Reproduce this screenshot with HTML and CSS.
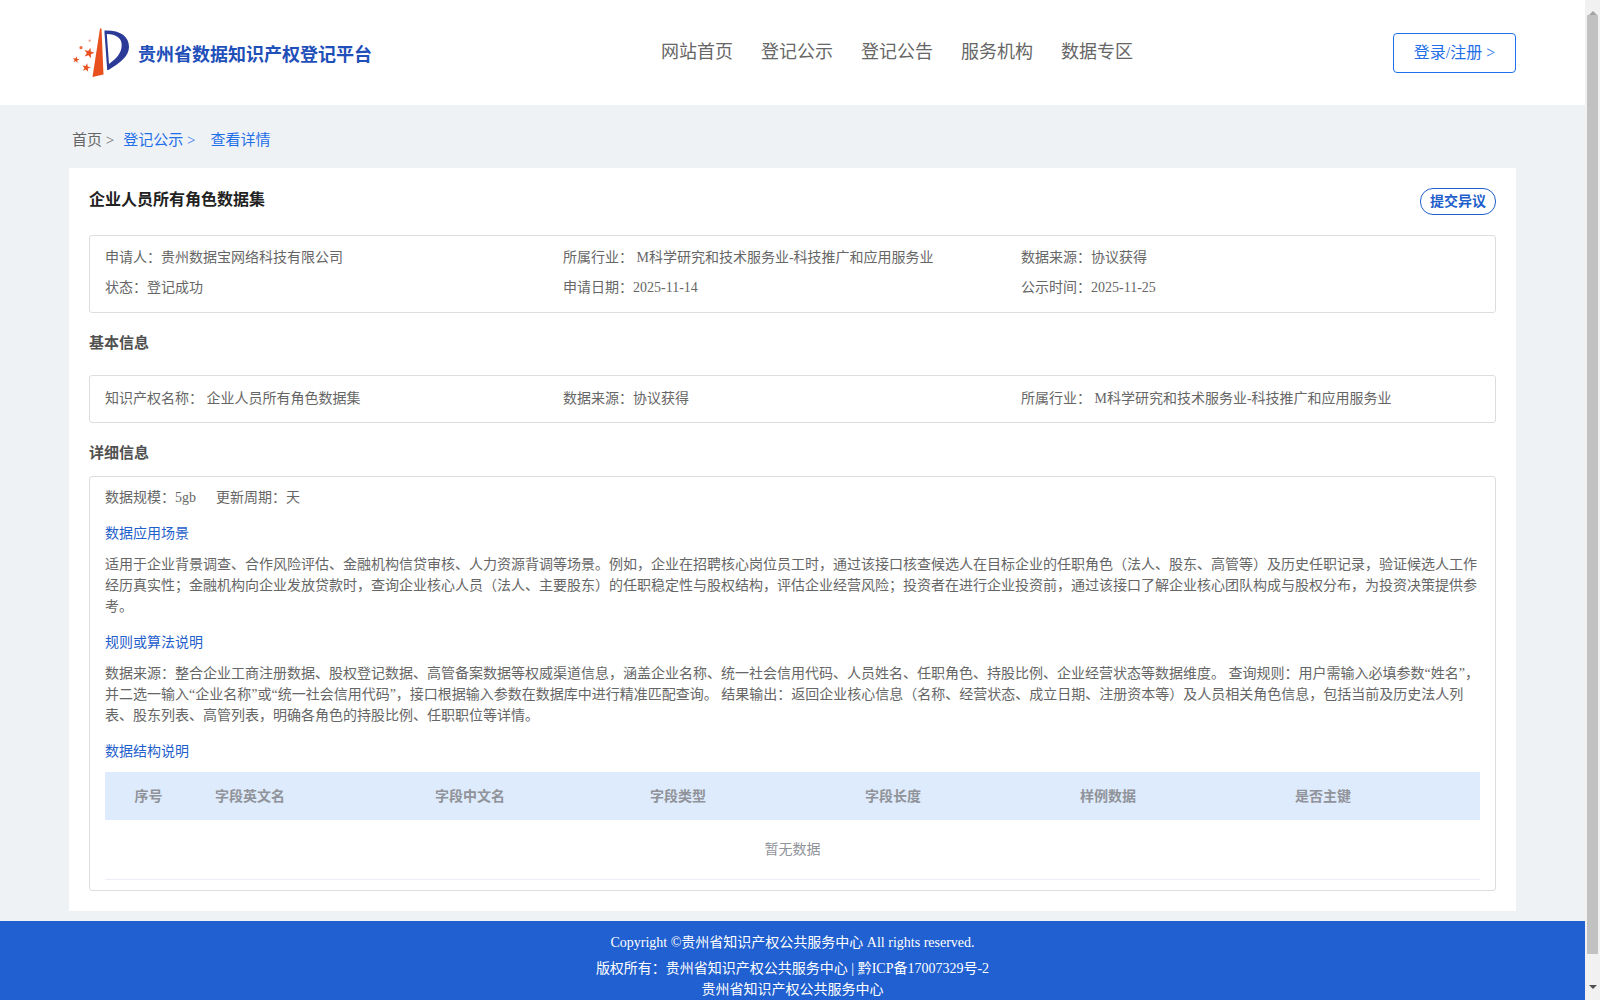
FILE: index.html
```html
<!DOCTYPE html>
<html lang="zh-CN">
<head>
<meta charset="utf-8">
<title>贵州省数据知识产权登记平台</title>
<link rel="stylesheet" href="styles.css">
</head>
<body>
<header class="topbar">
  <a class="brand">
    <svg class="brand-logo" viewBox="0 0 70 58" width="70" height="58">
      <defs>
        <polygon id="star" points="0,-1 .235,-.324 .951,-.309 .38,.124 .588,.809 0,.4 -.588,.809 -.38,.124 -.951,-.309 -.235,-.324"/>
      </defs>
      <path d="M36.500 6.500 C52 6 61 12 61 23 C61 32 52 39 40.500 46 L39.200 46 L36.500 9 Z M38.800 10 L41 40 C48 35 53.700 29 53.700 21 C53.700 14 48 10.200 38.800 10 Z" fill="#2b3a97" fill-rule="evenodd"/>
      <path d="M32 4.500 L33.500 4.500 L35.500 50.500 L24.500 53 Z" fill="#e8501f"/>
      <use href="#star" fill="#e8501f" transform="translate(21 29) scale(5.500) rotate(15)"/>
      <use href="#star" fill="#e8501f" transform="translate(8 35.700) scale(3.600) rotate(10)"/>
      <use href="#star" fill="#e8501f" transform="translate(18.300 43.700) scale(4.500) rotate(12)"/>
      <circle cx="13" cy="23.700" r="1.600" fill="#ee6a40"/>
      <circle cx="21.700" cy="16.700" r="1.100" fill="#f09a7c"/>
    </svg>
    <span class="brand-name">贵州省数据知识产权登记平台</span>
  </a>
  <nav class="nav">
    <a>网站首页</a>
    <a>登记公示</a>
    <a>登记公告</a>
    <a>服务机构</a>
    <a>数据专区</a>
  </nav>
  <a class="login">登录/注册 &gt;</a>
</header>

<div class="crumbs">
  <span class="crumb-home">首页 &gt;</span>
  <span class="crumb-link">登记公示 <i>&gt;</i></span>
  <span class="crumb-link">查看详情</span>
</div>

<main class="card">
  <div class="card-head">
    <h1>企业人员所有角色数据集</h1>
    <button class="objection">提交异议</button>
  </div>

  <section class="box meta">
    <div>申请人：贵州数据宝网络科技有限公司</div>
    <div>所属行业： M科学研究和技术服务业-科技推广和应用服务业</div>
    <div>数据来源：协议获得</div>
    <div>状态：登记成功</div>
    <div>申请日期：2025-11-14</div>
    <div>公示时间：2025-11-25</div>
  </section>

  <h2>基本信息</h2>
  <section class="box basic">
    <div>知识产权名称： 企业人员所有角色数据集</div>
    <div>数据来源：协议获得</div>
    <div>所属行业： M科学研究和技术服务业-科技推广和应用服务业</div>
  </section>

  <h2 class="detail-title">详细信息</h2>
  <section class="box detail">
    <div class="scale"><span>数据规模：5gb</span><span>更新周期：天</span></div>
    <h3>数据应用场景</h3>
    <p>适用于企业背景调查、合作风险评估、金融机构信贷审核、人力资源背调等场景。例如，企业在招聘核心岗位员工时，通过该接口核查候选人在目标企业的任职角色（法人、股东、高管等）及历史任职记录，验证候选人工作经历真实性；金融机构向企业发放贷款时，查询企业核心人员（法人、主要股东）的任职稳定性与股权结构，评估企业经营风险；投资者在进行企业投资前，通过该接口了解企业核心团队构成与股权分布，为投资决策提供参考。</p>
    <h3>规则或算法说明</h3>
    <p>数据来源：整合企业工商注册数据、股权登记数据、高管备案数据等权威渠道信息，涵盖企业名称、统一社会信用代码、人员姓名、任职角色、持股比例、企业经营状态等数据维度。 查询规则：用户需输入必填参数“姓名”，并二选一输入“企业名称”或“统一社会信用代码”，接口根据输入参数在数据库中进行精准匹配查询。 结果输出：返回企业核心信息（名称、经营状态、成立日期、注册资本等）及人员相关角色信息，包括当前及历史法人列表、股东列表、高管列表，明确各角色的持股比例、任职职位等详情。</p>
    <h3>数据结构说明</h3>
    <table class="fields">
      <colgroup>
        <col class="c-no"><col class="c-en"><col class="c-w"><col class="c-w"><col class="c-w"><col class="c-w"><col>
      </colgroup>
      <thead>
        <tr>
          <th class="th-no">序号</th>
          <th>字段英文名</th>
          <th>字段中文名</th>
          <th>字段类型</th>
          <th>字段长度</th>
          <th>样例数据</th>
          <th>是否主键</th>
        </tr>
      </thead>
      <tbody>
        <tr><td colspan="7">暂无数据</td></tr>
      </tbody>
    </table>
  </section>
</main>

<footer class="footer">
  <p>Copyright ©贵州省知识产权公共服务中心 All rights reserved.</p>
  <p>版权所有：贵州省知识产权公共服务中心 | 黔ICP备17007329号-2</p>
  <p>贵州省知识产权公共服务中心</p>
</footer>

<div class="scrollbar" aria-hidden="true">
  <span class="arrow-up"></span>
  <span class="thumb"></span>
  <span class="arrow-down"></span>
</div>
</body>
</html>
```
FILE: styles.css
```css
* { box-sizing: border-box; }
html { background: #f1f1f1; }
body {
  margin: 0 15px 0 0;
  background: #eff2f5;
  color: #666;
  font: 14px/21px "Liberation Serif", "Noto Sans CJK SC", serif;
}
a { text-decoration: none; }

.scrollbar {
  position: fixed;
  top: 0;
  right: 0;
  width: 15px;
  height: 1000px;
  background: #f1f1f1;
  display: flex;
  flex-direction: column;
  align-items: center;
}
.arrow-up, .arrow-down {
  flex: none;
  height: 15px;
  width: 8px;
  border-left: 4px solid transparent;
  border-right: 4px solid transparent;
}
.arrow-up { border-bottom: 4px solid #a3a3a3; border-top: 5px solid transparent; height: 15px; }
.arrow-down { border-top: 4px solid #505050; margin-top: 31px; height: 15px; }
.thumb { flex: none; width: 11px; height: 939px; background: #c1c1c1; }

.topbar {
  height: 105px;
  background: #fff;
  padding: 0 69px 0 72px;
  display: flex;
  align-items: center;
}
.brand { display: flex; align-items: center; width: 589px; }
.brand-logo { margin: 1px 0 0 -4px; flex: none; }
.brand-name { color: #1f4fb8; font-size: 18px; font-weight: 700; margin-left: 0; padding-top: 6px; white-space: nowrap; }
.nav { display: flex; gap: 28px; font-size: 18px; color: #666; margin-top: -1px; }
.login {
  margin-left: auto;
  width: 123px;
  height: 40px;
  border: 1px solid #1f6fe8;
  border-radius: 4px;
  color: #1f6fe8;
  font-size: 16px;
  line-height: 38px;
  text-align: center;
}

.crumbs { height: 63px; padding: 23px 0 0 72px; font-size: 15px; line-height: 25px; display: flex; }
.crumb-home { color: #666; margin-right: 9px; }
.crumb-link { color: #1f6fe8; margin-right: 15px; }
.crumb-link i { font-style: normal; }

.card {
  margin: 0 69px;
  background: #fff;
  padding: 20px 20px 21px;
  height: 743px;
}
.card-head { display: flex; justify-content: space-between; align-items: flex-start; height: 47px; }
h1 { margin: 0; font-size: 16px; line-height: 23px; color: #222; font-weight: 700; }
.objection {
  width: 76px;
  height: 27px;
  padding: 0;
  background: #fff;
  border: 1px solid #1f5fcb;
  border-radius: 13px;
  color: #1f5fcb;
  font: 700 14px/25px "Liberation Serif", "Noto Sans CJK SC", serif;
}
.box { border: 1px solid #ddd; border-radius: 3px; }
.meta {
  height: 78px;
  padding: 6px 15px 0;
  display: grid;
  grid-template-columns: repeat(3, 458px);
  grid-auto-rows: 30px;
  align-items: center;
}
h2 { margin: 0; font-size: 15px; line-height: 21px; font-weight: 700; color: #505050; padding: 20px 0 21px; }
.basic {
  height: 48px;
  padding: 0 15px 2px;
  display: grid;
  grid-template-columns: repeat(3, 458px);
  align-items: center;
}
.detail-title { padding: 20px 0 12px; }
.detail { height: 415px; padding: 10px 15px 0; }
.scale span + span { margin-left: 20px; }
h3 { margin: 15px 0 10px; font-size: 14px; line-height: 21px; font-weight: 400; color: #1f5fcb; }
.detail p { margin: 0; text-align: left; }
.fields { width: 1375px; table-layout: fixed; border-collapse: collapse; margin-top: 10px; }
.c-no { width: 90px; }
.c-en { width: 220px; }
.c-w { width: 215px; }
.fields th {
  height: 48px;
  background: #deebfc;
  color: #909399;
  font-weight: 700;
  text-align: left;
  padding: 0 0 0 20px;
}
.fields .th-no { text-align: center; padding: 0 3px 0 0; }
.fields td {
  height: 59px;
  text-align: center;
  color: #909399;
  border-bottom: 1px solid #ebeef5;
}

.footer {
  margin-top: 10px;
  height: 79px;
  overflow: hidden;
  background: #2060d0;
  color: #fff;
  text-align: center;
  padding-top: 11px;
}
.footer p { margin: 0; }
.footer p:nth-child(2) { margin-top: 5px; }
```
